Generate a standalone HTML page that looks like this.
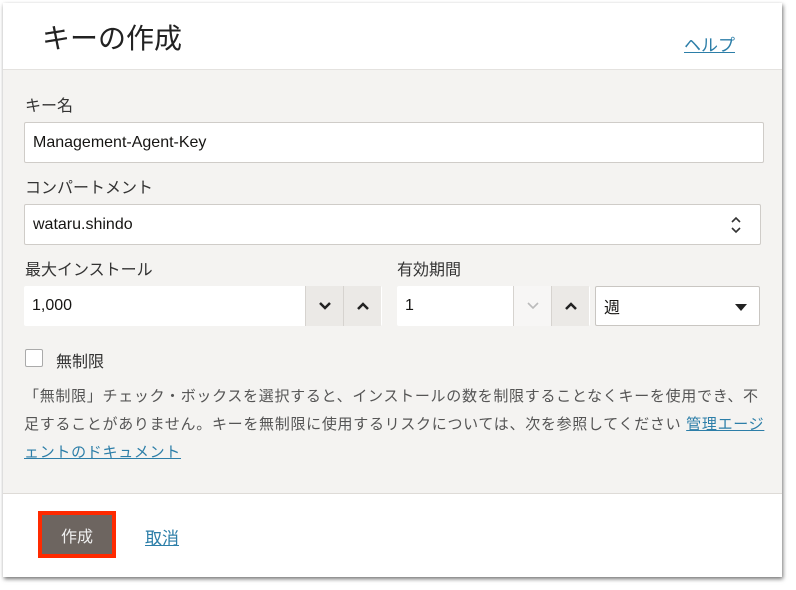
<!DOCTYPE html>
<html><head><meta charset="utf-8"><style>
*{box-sizing:border-box;margin:0;padding:0}
body{width:796px;height:590px;background:#fff;font-family:"Liberation Sans","Noto Sans CJK JP",sans-serif;color:#161513;position:relative;overflow:hidden}
.dlg{position:absolute;left:3px;top:3px;width:779px;height:574px;background:#fff;box-shadow:1px 2px 4px rgba(0,0,0,.55)}
.hdr{position:absolute;left:0;top:0;width:779px;height:67px;background:#fff;border-bottom:1px solid #e4e2df}
.body{position:absolute;left:0;top:67px;width:779px;height:424px;background:#f4f3f1;border-bottom:1px solid #dedbd7}
.a{position:absolute}
.lbl{font-size:16px;color:#333}
.inp{position:absolute;background:#fff;border:1px solid #cfccc8;border-radius:2px;font-size:16px;padding-left:8px;display:flex;align-items:center}
.btn{position:absolute;background:#ebe9e6;border-left:1px solid #d6d3cf;display:flex;align-items:center;justify-content:center}
a{color:#2c7ea8;text-decoration:underline}
</style></head><body>
<div class="dlg">
<div class="hdr">
<div class="a" style="left:39px;top:14px;font-size:28px;color:#222">キーの作成</div>
<div class="a" style="left:681px;top:28px;font-size:17px"><a>ヘルプ</a></div>
</div>
<div class="body"></div>
</div>
<div class="a lbl" style="left:25px;top:92px">キー名</div>
<div class="inp" style="left:24px;top:122px;width:740px;height:41px">Management-Agent-Key</div>
<div class="a lbl" style="left:25px;top:174px">コンパートメント</div>
<div class="inp" style="left:24px;top:204px;width:737px;height:41px">wataru.shindo
<svg class="a" style="right:18px;top:10px" width="12" height="20" viewBox="0 0 12 20"><path d="M2 7l4-4 4 4M2 13l4 4 4-4" fill="none" stroke="#333" stroke-width="1.6"/></svg></div>
<div class="a lbl" style="left:25px;top:256px">最大インストール</div>
<div class="a lbl" style="left:397px;top:256px">有効期間</div>
<div class="inp" style="left:24px;top:286px;width:358px;height:40px;border:none">1,000
<div class="btn" style="left:281px;top:0;width:38px;height:40px"><svg width="12" height="8"><path d="M1 1l5 5 5-5" fill="none" stroke="#222" stroke-width="2.5"/></svg></div>
<div class="btn" style="left:319px;top:0;width:38px;height:40px"><svg width="12" height="8"><path d="M1 7l5-5 5 5" fill="none" stroke="#222" stroke-width="2.5"/></svg></div>
</div>
<div class="inp" style="left:397px;top:286px;width:193px;height:40px;border:none">1
<div class="btn" style="left:116px;top:0;width:38px;height:40px;background:#f7f6f5"><svg width="12" height="8"><path d="M1 1l5 5 5-5" fill="none" stroke="#bbb" stroke-width="1.6"/></svg></div>
<div class="btn" style="left:154px;top:0;width:38px;height:40px"><svg width="12" height="8"><path d="M1 7l5-5 5 5" fill="none" stroke="#222" stroke-width="2.5"/></svg></div>
</div>
<div class="inp" style="left:595px;top:286px;width:165px;height:40px;border:1px solid #c9c6c2">週
<svg class="a" style="right:12px;top:17px" width="12" height="7"><path d="M0 0h12L6 7z" fill="#222"/></svg></div>
<div class="a" style="left:25px;top:349px;width:18px;height:18px;background:#fff;border:1px solid #aaa;border-radius:2px"></div>
<div class="a lbl" style="left:56px;top:348px">無制限</div>
<div class="a" style="left:24px;top:383px;width:742px;font-size:15px;letter-spacing:0.7px;line-height:28px;color:#555">「無制限」チェック・ボックスを選択すると、インストールの数を制限することなくキーを使用でき、不足することがありません。キーを無制限に使用するリスクについては、次を参照してください <a>管理エージェントのドキュメント</a></div>
<div class="a" style="left:38px;top:511px;width:78px;height:47px;background:#ff2a00;padding:4px">
<div style="width:100%;height:100%;background:#6d6560;color:#eee;font-size:16px;display:flex;align-items:center;justify-content:center">作成</div></div>
<div class="a" style="left:145px;top:524px;font-size:17px"><a>取消</a></div>
</body></html>
